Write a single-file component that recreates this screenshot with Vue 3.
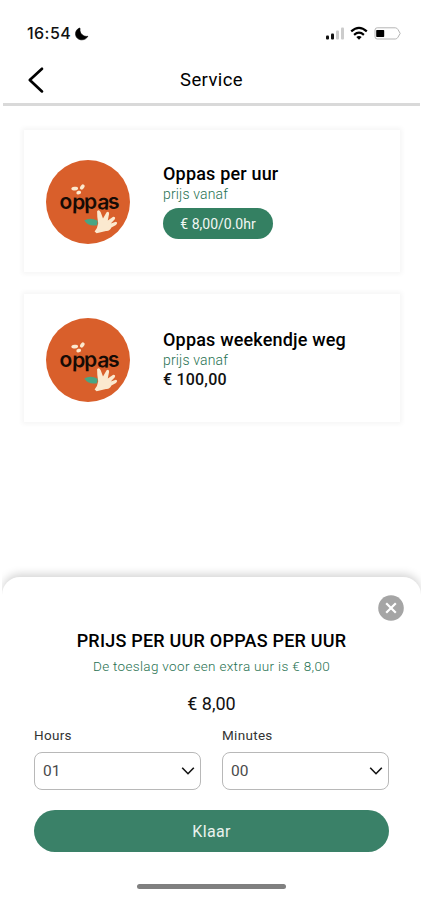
<script setup>
import { ref } from 'vue'

const services = [
  { name: 'Oppas per uur', price: '€ 8,00/0.0hr', hourly: true },
  { name: 'Oppas weekendje weg', price: '€ 100,00', hourly: false }
]
const fields = ref([
  { label: 'Hours', value: '01' },
  { label: 'Minutes', value: '00' }
])
</script>

<template>
  <div class="screen">
    <div class="status">
      <span class="time">16:54</span>
      <svg class="moon" width="14" height="14" viewBox="0 0 14 14">
        <path d="M4.2 1.2C1.8 2.2 .6 4.3 .6 6.8C.6 10.4 3.2 12.8 6.8 12.8C9.4 12.8 11.6 11.6 12.8 9.3C8.6 10.2 4.2 6.6 5 1.6C5.1 1.1 4.7 1 4.2 1.2Z" fill="#000" stroke="#000" stroke-width=".7" />
      </svg>
      <svg class="signals" width="78" height="16" viewBox="0 0 78 16">
        <rect x="1" y="9.5" width="3" height="4" rx="1" fill="#111" />
        <rect x="6" y="7.5" width="3" height="6" rx="1" fill="#111" />
        <rect x="11" y="4.5" width="3" height="9" rx="1" fill="#ccc" />
        <rect x="16" y="1.5" width="3" height="12" rx="1" fill="#ccc" />
        <g fill="none" stroke="#000" stroke-width="2.2">
          <path d="M26.2 5.4Q34 -1.8 41.8 5.4" />
          <path d="M29.1 8.8Q34 4.6 38.9 8.8" />
        </g>
        <path d="M31.3 11Q34 8.8 36.7 11L34 13.8Z" fill="#000" />
        <path d="M52.2 1.8H70.3Q72 1.8 73 3.6L75.2 7.4L73 11.2Q72 13 70.3 13H52.2Q50 13 50 10.8V4Q50 1.8 52.2 1.8Z" fill="#fff" stroke="#b5b5b5" />
        <rect x="51.2" y="4" width="8" height="7" rx=".7" fill="#000" />
      </svg>
    </div>

    <header class="header">
      <svg class="back" width="18" height="28" viewBox="0 0 18 28">
        <path d="M16 2.8L3.8 14L16 25.4" fill="none" stroke="#000" stroke-width="2.7" stroke-linecap="round" stroke-linejoin="round" />
      </svg>
      <h1>Service</h1>
    </header>

    <main class="list">
      <article v-for="s in services" :key="s.name" class="card" :class="{ hourly: s.hourly }">
        <svg class="logo" width="84" height="84" viewBox="0 0 84 84">
          <circle cx="42" cy="42" r="42" fill="#d95f2b" />
          <g fill="#fbe9cf">
            <ellipse cx="28.7" cy="28.6" rx="3.4" ry="1.8" transform="rotate(-8 28.7 28.6)" />
            <ellipse cx="36.3" cy="27" rx="2.8" ry="1.9" transform="rotate(-55 36.3 27)" />
            <ellipse cx="32.7" cy="32.6" rx="2.4" ry="1.8" transform="rotate(-15 32.7 32.6)" />
          </g>
          <text class="mark" x="13.8" y="49" textLength="60" lengthAdjust="spacing" rotate="-3 2 -2 4 -3">oppas</text>
          <path d="M38.3 60.6Q44 56.8 51.8 60.7L51 65.2Q42.5 67 38.3 60.6Z" fill="#48a583" />
          <path d="M48.6 71.6Q51.6 68 52.2 63.2Q51 57 51.1 51.2Q53 49 54.7 52.2L57 58.6L60.6 52.2Q63 50.8 63.1 53.8L61.8 60.4L67.2 56.8Q70.2 56.8 68.6 59.4L64.8 63.6L69.8 61.8Q72.4 62.6 70 65L65.4 67.6Q63.8 71.4 60 71L50.6 73.2Z" fill="#fbe9cf" />
        </svg>
        <div class="info">
          <h2>{{ s.name }}</h2>
          <span class="from">prijs vanaf</span>
          <span :class="s.hourly ? 'pill' : 'price'">{{ s.price }}</span>
        </div>
      </article>
    </main>

    <section class="sheet">
      <button class="close" aria-label="Sluiten">
        <svg width="26" height="26" viewBox="0 0 26 26">
          <circle cx="13" cy="13" r="12.8" fill="#a5a5a5" />
          <path d="M8.2 8.2L17.8 17.8M17.8 8.2L8.2 17.8" stroke="#fff" stroke-width="2.2" />
        </svg>
      </button>
      <h3>PRIJS PER UUR OPPAS PER UUR</h3>
      <p class="note">De toeslag voor een extra uur is € 8,00</p>
      <p class="total">€ 8,00</p>
      <div class="fields">
        <div v-for="f in fields" :key="f.label" class="field">
          <label>{{ f.label }}</label>
          <div class="select">
            <span>{{ f.value }}</span>
            <svg width="14" height="10" viewBox="0 0 14 10">
              <path d="M1.2 1.7L7 7.7L12.8 1.7" fill="none" stroke="#111" stroke-width="1.6" />
            </svg>
          </div>
        </div>
      </div>
      <button class="done">Klaar</button>
      <div class="home"></div>
    </section>
  </div>
</template>

<style>
body { background: #fff; }
</style>

<style scoped>
* { box-sizing: border-box; margin: 0; }
.screen {
  width: 424px; height: 900px; overflow: hidden;
  display: flex; flex-direction: column;
  font-family: Roboto, "Liberation Sans", sans-serif; color: #111; background: #fff;
}
.status { height: 56px; padding: 23px 21px 0 27px; display: flex; align-items: flex-start; }
.time { font: 500 16px/20px Inter, sans-serif; width: 48px; letter-spacing: .45px; }
.moon { margin-top: 4px; }
.signals { margin: 3px 0 0 auto; }
.header {
  height: 50px; margin: 0 4px 0 3px; padding-left: 23px; border-bottom: 3px solid #d9d9d9;
  display: grid; grid-template-columns: 40px 1fr 63px; align-items: start;
}
.back { margin-top: 10px; }
h1 { font-size: 18.5px; line-height: 24px; font-weight: 400; text-align: center; margin-top: 12px; letter-spacing: .4px; color: #000; }
.list { padding: 24px 24px 0; display: flex; flex-direction: column; gap: 22px; flex: 1; }
.card {
  height: 128px; padding-left: 22px; display: flex; gap: 33px; background: #fff;
  box-shadow: 0 0 5px 2px rgba(0, 0, 0, .045);
}
.card .logo { margin-top: 24px; }
.card.hourly { height: 142px; }
.card.hourly .logo { margin-top: 30px; }
.mark { font: 600 21px/1 Inter, Lato, sans-serif; fill: #160b05; }
.info { display: flex; flex-direction: column; align-items: flex-start; padding-top: 34px; }
.card.hourly .info { padding-top: 32px; }
h2 { font-size: 18px; line-height: 24px; font-weight: 500; letter-spacing: .18px; color: #000; }
.from { font-size: 14px; line-height: 17px; font-weight: 300; letter-spacing: .15px; color: #1f7151; }
.price { font-size: 16px; line-height: 21px; font-weight: 500; letter-spacing: .2px; }
.pill {
  margin-top: 5px; width: 110px; height: 31px; border-radius: 16px; background: #348062;
  color: #f2f7f4; font-size: 14px; line-height: 32px; text-align: center;
}
.sheet {
  position: relative; height: 323px; margin: 0 3px 0 2px; padding: 53px 32px 0;
  border-radius: 18px 18px 0 0; background: #fff; box-shadow: 0 -3px 9px rgba(0, 0, 0, .17);
  clip-path: inset(-20px 0 0 0);
  display: flex; flex-direction: column; align-items: center;
}
.close { position: absolute; top: 18px; right: 17px; width: 26px; height: 26px; border: 0; padding: 0; background: none; }
.close svg { display: block; }
h3 { font-size: 18px; line-height: 22px; font-weight: 500; letter-spacing: .22px; white-space: nowrap; color: #000; }
.note { margin-top: 5px; font-size: 13.5px; line-height: 18px; font-weight: 300; letter-spacing: .33px; color: #1f7151; white-space: nowrap; }
.total { margin-top: 17px; font-size: 18px; line-height: 24px; }
.fields { width: 355px; margin-top: 10px; display: grid; grid-template-columns: 1fr 1fr; gap: 21px; }
label { display: block; font-size: 13.5px; line-height: 18px; height: 26px; letter-spacing: .3px; color: #333; }
.select {
  height: 38px; padding: 0 5px 0 8px; border: 1px solid #b8b8b8; border-radius: 8px;
  display: flex; justify-content: space-between; align-items: center;
  font-size: 15.5px; color: #4a4a4a;
}
.done {
  width: 355px; height: 42px; margin-top: 20px; border: 0; padding: 0; flex: none; border-radius: 21px;
  background: #3a8168; color: #e9f2ee; font: 400 16px/43px Roboto, sans-serif; letter-spacing: .3px;
}
.home { width: 149px; height: 5px; flex: none; margin-top: 32px; border-radius: 3px; background: #808080; }
</style>
